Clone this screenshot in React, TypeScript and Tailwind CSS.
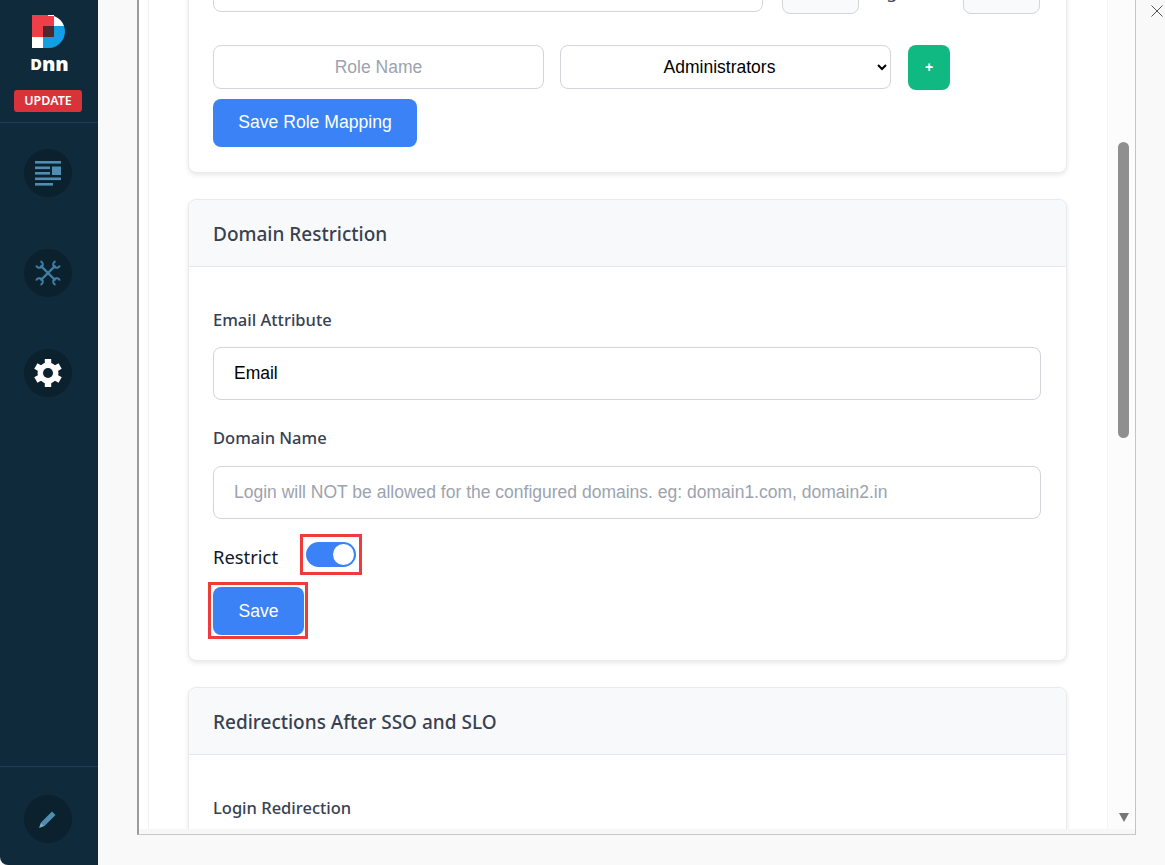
const sans = "font-['Noto_Sans',sans-serif]";
const arial = "font-['Liberation_Sans',Arial,sans-serif]";

function Circle({ className, children }: { className: string; children: React.ReactNode }) {
  return (
    <div className={`w-12 h-12 -ml-[2px] rounded-full bg-[#0c212e] flex items-center justify-center ${className}`}>
      {children}
    </div>
  );
}

function Logo() {
  return (
    <svg width="33" height="33" viewBox="0 0 33 33">
      <path d="M0 0H22V11H11V22H0Z" fill="#ee3e48" />
      <path d="M22 0.9A16.5 16.5 0 0 1 32 11H22Z" fill="#ffffff" />
      <path d="M16 0H22V1H16Z" fill="#ffffff" />
      <path d="M22 11H32A16.5 16.5 0 0 1 16.5 33H11V22H22Z" fill="#13a0e2" />
      <rect x="11" y="11" width="11" height="11" fill="#4a2a2e" />
      <rect x="0" y="22" width="11" height="11" fill="#ffffff" />
    </svg>
  );
}

function Gear() {
  return (
    <svg width="28" height="28" viewBox="0 0 28 28">
      <circle cx="14" cy="14" r="10.5" fill="#ffffff" />
      {[0, 60, 120, 180, 240, 300].map((r) => (
        <rect key={r} x="10.8" y="0" width="6.4" height="6" fill="#ffffff" transform={`rotate(${r} 14 14)`} />
      ))}
      <circle cx="14" cy="14" r="5" fill="#0c212e" />
    </svg>
  );
}

function Sidebar() {
  return (
    <aside className="w-[98px] h-[865px] shrink-0 bg-[#0f2a3a] rounded-bl-[8px] flex flex-col items-center">
      <div className="w-full h-[123px] border-b border-[#1f3f50] flex flex-col items-center pt-[15px]">
        <div className="w-[33px] h-[33px] -ml-[1px]">
          <Logo />
        </div>
        <div className={`h-[20px] mt-[5px] ml-[1px] flex items-end justify-center text-white font-black leading-none ${sans}`}>
          <span className="text-[16px] leading-[18px]">D</span>
          <span className="text-[20px] leading-[18px]">nn</span>
        </div>
        <div className={`mt-[17px] -ml-[2px] w-[68px] h-[22px] rounded-[3px] bg-[#d9323a] text-white text-[12.5px] font-semibold flex items-center justify-center ${sans}`}>
          UPDATE
        </div>
      </div>
      <Circle className="mt-[26px]">
        <svg width="26" height="25" viewBox="0 0 26 25" fill="#4f8db3">
          <rect x="0" y="0" width="26" height="2.6" />
          <rect x="0" y="5.5" width="15" height="2.6" />
          <rect x="17" y="5.5" width="9" height="8.5" />
          <rect x="0" y="11" width="15" height="2.6" />
          <rect x="0" y="16.5" width="26" height="2.6" />
          <rect x="0" y="22" width="18" height="2.6" />
        </svg>
      </Circle>
      <Circle className="mt-[52px]">
        <svg width="28" height="28" viewBox="0 0 28 28" fill="none" stroke="#3f7fa6" strokeWidth="2">
          {[0, 90].map((r) => (
            <g key={r} transform={`rotate(${r} 14 14)`}>
              <path d="M6.5 21.5L21.5 6.5" strokeWidth="2.4" />
              <path d="M21.5 2.2A3.4 3.4 0 1 0 25.8 6.5" />
              <path d="M21.5 2.2A3.4 3.4 0 1 0 25.8 6.5" transform="rotate(180 14 14)" />
            </g>
          ))}
        </svg>
      </Circle>
      <Circle className="mt-[52px]">
        <Gear />
      </Circle>
      <div className="mt-auto w-full h-[99px] border-t border-[#1f3f50] flex items-start justify-center pt-[28px]">
        <Circle className="">
          <svg width="18" height="18" viewBox="0 0 18 18">
            <path d="M2 12.5L13 1.5L16.5 5L5.5 16Z" fill="#4f8db3" />
            <path d="M2 12.5L5.5 16L0 18Z" fill="#7fa8c0" />
          </svg>
        </Circle>
      </div>
    </aside>
  );
}

const inputCls = `border border-[#d1d5db] rounded-[8px] bg-white outline-none text-[17.5px] text-black placeholder:text-[#9ca3af] ${arial}`;

function CardHeader({ title }: { title: string }) {
  return (
    <div className="h-[67px] px-[24px] pt-[2px] bg-[#f8f9fb] border-b border-[#e5e7eb] rounded-t-[8px] flex items-center">
      <h3 className={`text-[19px] font-medium text-[#374151] ${sans}`}>{title}</h3>
    </div>
  );
}

function FieldLabel({ children, className }: { children: React.ReactNode; className: string }) {
  return <div className={`text-[16.5px] leading-[24px] font-medium text-[#374151] ${sans} ${className}`}>{children}</div>;
}

function Content() {
  return (
    <div className="-mt-[60px] px-[39px]">
      <section className="w-[879px] h-[233px] border border-[#e9eaec] rounded-[8px] shadow-[0_2px_5px_rgba(0,0,0,0.09)] bg-white px-[24px] pt-[27px]">
        <div className="flex items-start h-[46px]">
          <input className={`w-[550px] h-[44px] pl-[20px] pb-[3px] ${inputCls}`} defaultValue="y" readOnly />
          <div className="w-[77px] h-[46px] ml-[19px] border border-[#d1d5db] rounded-[8px] bg-[#f9fafb]" />
          <div className={`w-[104px] h-[46px] pl-[6px] flex items-center text-[18px] text-[#374151] ${sans}`}>Regex</div>
          <div className="w-[77px] h-[46px] border border-[#d1d5db] rounded-[8px] bg-[#f9fafb]" />
        </div>
        <div className="flex items-start mt-[31px]">
          <input className={`w-[331px] h-[44px] text-center ${inputCls}`} placeholder="Role Name" />
          <select
            defaultValue="Administrators"
            className={`w-[331px] h-[44px] ml-[16px] [text-align-last:center] ${inputCls}`}
          >
            <option>Administrators</option>
          </select>
          <button className={`w-[42px] h-[45px] ml-[17px] rounded-[8px] bg-[#10b981] text-white text-[14px] font-bold ${arial}`}>+</button>
        </div>
        <button className={`block w-[204px] h-[48px] mt-[9px] pb-[2px] rounded-[8px] bg-[#3b82f6] text-white text-[17.6px] ${arial}`}>
          Save Role Mapping
        </button>
      </section>

      <section className="w-[879px] mt-[26px] h-[462px] border border-[#e9eaec] rounded-[8px] shadow-[0_2px_5px_rgba(0,0,0,0.09)] bg-white">
        <CardHeader title="Domain Restriction" />
        <div className="px-[24px]">
          <FieldLabel className="pt-[41px]">Email Attribute</FieldLabel>
          <input className={`block w-[828px] h-[53px] mt-[15px] px-[20px] ${inputCls}`} defaultValue="Email" readOnly />
          <FieldLabel className="mt-[26px]">Domain Name</FieldLabel>
          <input
            className={`block w-[828px] h-[53px] mt-[16px] px-[20px] ${inputCls}`}
            placeholder="Login will NOT be allowed for the configured domains. eg: domain1.com, domain2.in"
          />
          <div className="flex items-center h-[41px] mt-[15px]">
            <span className={`text-[18.4px] pt-[5px] text-[#111827] w-[87px] ${sans}`}>Restrict</span>
            <div className="w-[62px] h-[41px] border-[3px] border-[#ef3b3b] flex items-center justify-center">
              <div className="w-[50px] h-[25px] -ml-[1px] rounded-full bg-[#3b82f6] flex items-center justify-end pr-[2px]">
                <div className="w-[21px] h-[21px] rounded-full bg-white" />
              </div>
            </div>
          </div>
          <div className="w-[100px] h-[57px] mt-[7px] -ml-[5px] border-[3px] border-[#ef3b3b] pt-[2px] pl-[2px]">
            <button className={`w-[91px] h-[48px] rounded-[8px] bg-[#3b82f6] text-white text-[17.6px] ${arial}`}>Save</button>
          </div>
        </div>
      </section>

      <section className="w-[879px] mt-[26px] h-[300px] border border-[#e9eaec] rounded-[8px] shadow-[0_2px_5px_rgba(0,0,0,0.09)] bg-white">
        <CardHeader title="Redirections After SSO and SLO" />
        <div className="px-[24px]">
          <FieldLabel className="pt-[41px]">Login Redirection</FieldLabel>
        </div>
      </section>
    </div>
  );
}

export default function App() {
  return (
    <div className="relative w-[1165px] h-[865px] overflow-hidden bg-[#f9f9f9] flex">
      <Sidebar />
      <main className="ml-[39px] w-[999px] h-[835px] border-l-2 border-r border-b border-l-[#9c9c9c] border-r-[#c4c4c4] border-b-[#c8c8c8] bg-[#f7f7f7] flex flex-col">
        <div className="h-[829px] bg-white flex overflow-hidden">
          <div className="w-[9px] shrink-0" />
          <div className="w-[959px] shrink-0 border-l border-[#f0f0f0] overflow-hidden">
            <Content />
          </div>
          <div className="flex-1 bg-[#fcfcfc] border-l border-[#f4f4f4] flex flex-col items-start pl-[10px]">
            <div className="w-[11px] h-[296px] mt-[142px] rounded-full bg-[#8f8f8f]" />
            <svg className="mt-[375px] ml-[1px]" width="10" height="9" viewBox="0 0 10 9">
              <path d="M0 0H10L5 9Z" fill="#777777" />
            </svg>
          </div>
        </div>
      </main>
      <svg className="absolute left-[1151px] top-[5px]" width="12" height="12" viewBox="0 0 12 12" stroke="#555555" strokeWidth="1">
        <path d="M0.5 0.5L11.5 11.5M11.5 0.5L0.5 11.5" />
      </svg>
    </div>
  );
}
